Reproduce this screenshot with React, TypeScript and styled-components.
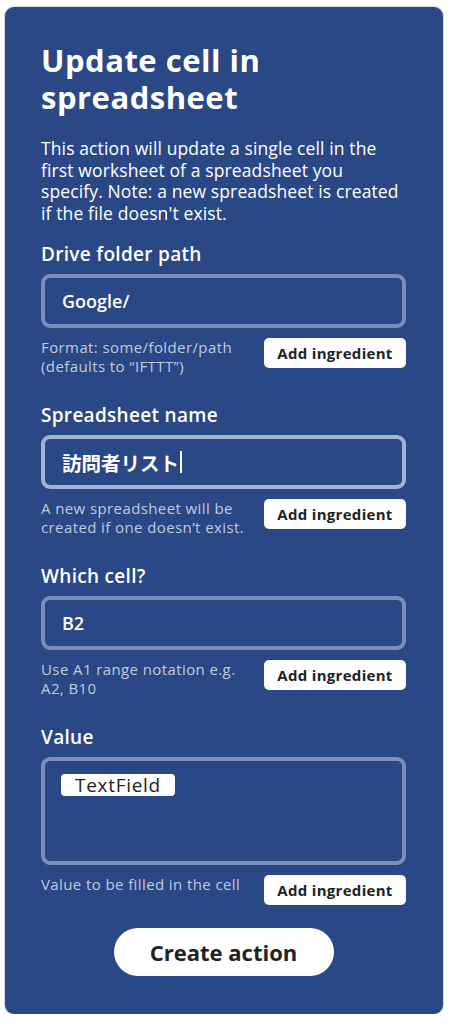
import React from "react";
import styled, { createGlobalStyle } from "styled-components";

const FONT = `"Open Sans", "Noto Sans CJK JP", sans-serif`;

interface FieldProps {
    label: string;
    value?: string;
    hint: React.ReactNode;
    focused?: boolean;
    tall?: boolean;
    chip?: string;
    cjk?: boolean;
}

const Field: React.FC<FieldProps> = ({ label, value, hint, focused, tall, chip, cjk }) => (
    <Section>
        <Label>{label}</Label>
        <InputBox $focused={focused} $tall={tall}>
            {chip ? (
                <Chip>{chip}</Chip>
            ) : (
                <InputText $cjk={cjk}>
                    {value}
                    {focused && <Caret />}
                </InputText>
            )}
        </InputBox>
        <HelperRow>
            <Hint>{hint}</Hint>
            <IngredientBtn>Add ingredient</IngredientBtn>
        </HelperRow>
    </Section>
);

export default function App() {
    return (
        <>
            <GlobalStyle />
            <Card>
                <Title>Update cell in spreadsheet</Title>
                <Description>
                    This action will update a single cell in the first worksheet of a
                    spreadsheet you specify. Note: a new spreadsheet is created if the
                    file doesn't exist.
                </Description>
                <Fields>
                    <Field
                        label="Drive folder path"
                        value="Google/"
                        hint={
                            <>
                                Format: some/folder/path
                                <br />
                                (defaults to “IFTTT”)
                            </>
                        }
                    />
                    <Field
                        label="Spreadsheet name"
                        value="訪問者リスト"
                        focused
                        cjk
                        hint={
                            <>
                                A new spreadsheet will be
                                <br />
                                created if one doesn’t exist.
                            </>
                        }
                    />
                    <Field
                        label="Which cell?"
                        value="B2"
                        hint={
                            <>
                                Use A1 range notation e.g.
                                <br />
                                A2, B10
                            </>
                        }
                    />
                    <Field
                        label="Value"
                        tall
                        chip="TextField"
                        hint="Value to be filled in the cell"
                    />
                </Fields>
                <CreateBtn>Create action</CreateBtn>
            </Card>
        </>
    );
}

const GlobalStyle = createGlobalStyle`
    body {
        margin: 0;
        background: #fff;
        font-family: ${FONT};
    }
`;

const Card = styled.div`
    box-sizing: border-box;
    width: 438px;
    height: 1007px;
    margin: 7px 0 0 5px;
    padding: 35px 37px 36px 36px;
    background: #2a4786;
    border-radius: 9px;
    box-shadow: 0 0 0 1px rgba(160, 178, 215, 0.5);
    display: flex;
    flex-direction: column;
    color: #fff;
`;

const Title = styled.h1`
    margin: 0;
    max-width: 300px;
    font-size: 31px;
    line-height: 37px;
    font-weight: 700;
    letter-spacing: 0.5px;
`;

const Description = styled.p`
    margin: 22px 0 0;
    font-size: 17.5px;
    line-height: 21.5px;
    font-weight: 400;
    letter-spacing: 0.12px;
`;

const Fields = styled.div`
    margin-top: 18px;
    display: flex;
    flex-direction: column;
    gap: 27px;
`;

const Section = styled.div`
    display: flex;
    flex-direction: column;
`;

const Label = styled.div`
    font-size: 19px;
    line-height: 24px;
    font-weight: 600;
    letter-spacing: 0.3px;
`;

const InputBox = styled.div<{ $focused?: boolean; $tall?: boolean }>`
    box-sizing: border-box;
    margin-top: 8px;
    height: ${(p) => (p.$tall ? "108px" : "54px")};
    border: 4px solid ${(p) => (p.$focused ? "#a3b2d5" : "#7b8ebd")};
    border-radius: 9px;
    padding: ${(p) => (p.$tall ? "13px 16px" : "0 17px")};
    display: flex;
    align-items: ${(p) => (p.$tall ? "flex-start" : "center")};
`;

const InputText = styled.span<{ $cjk?: boolean }>`
    font-size: ${(p) => (p.$cjk ? "19.5px" : "18px")};
    font-weight: 600;
    display: flex;
    align-items: center;
`;

const Caret = styled.span`
    display: inline-block;
    width: 1.5px;
    height: 22px;
    margin-left: 1px;
    background: #fff;
`;

const Chip = styled.span`
    background: #fff;
    color: #222;
    border-radius: 4px;
    height: 22px;
    padding: 0 14px;
    font-size: 19px;
    line-height: 22px;
    font-weight: 400;
    letter-spacing: 0.7px;
`;

const HelperRow = styled.div`
    margin-top: 10px;
    display: flex;
    justify-content: space-between;
    align-items: flex-start;
`;

const Hint = styled.div`
    font-size: 15px;
    line-height: 19px;
    letter-spacing: 0.4px;
    color: rgba(255, 255, 255, 0.72);
`;

const IngredientBtn = styled.button`
    box-sizing: border-box;
    width: 142px;
    height: 30px;
    border: none;
    border-radius: 5px;
    background: #fff;
    color: #222;
    font-family: ${FONT};
    font-size: 15px;
    font-weight: 700;
    letter-spacing: 0.3px;
    padding: 0;
`;

const CreateBtn = styled.button`
    align-self: center;
    margin-top: 23px;
    width: 220px;
    height: 48px;
    border: none;
    border-radius: 24px;
    background: #fff;
    color: #222;
    font-family: ${FONT};
    font-size: 22px;
    font-weight: 700;
`;
